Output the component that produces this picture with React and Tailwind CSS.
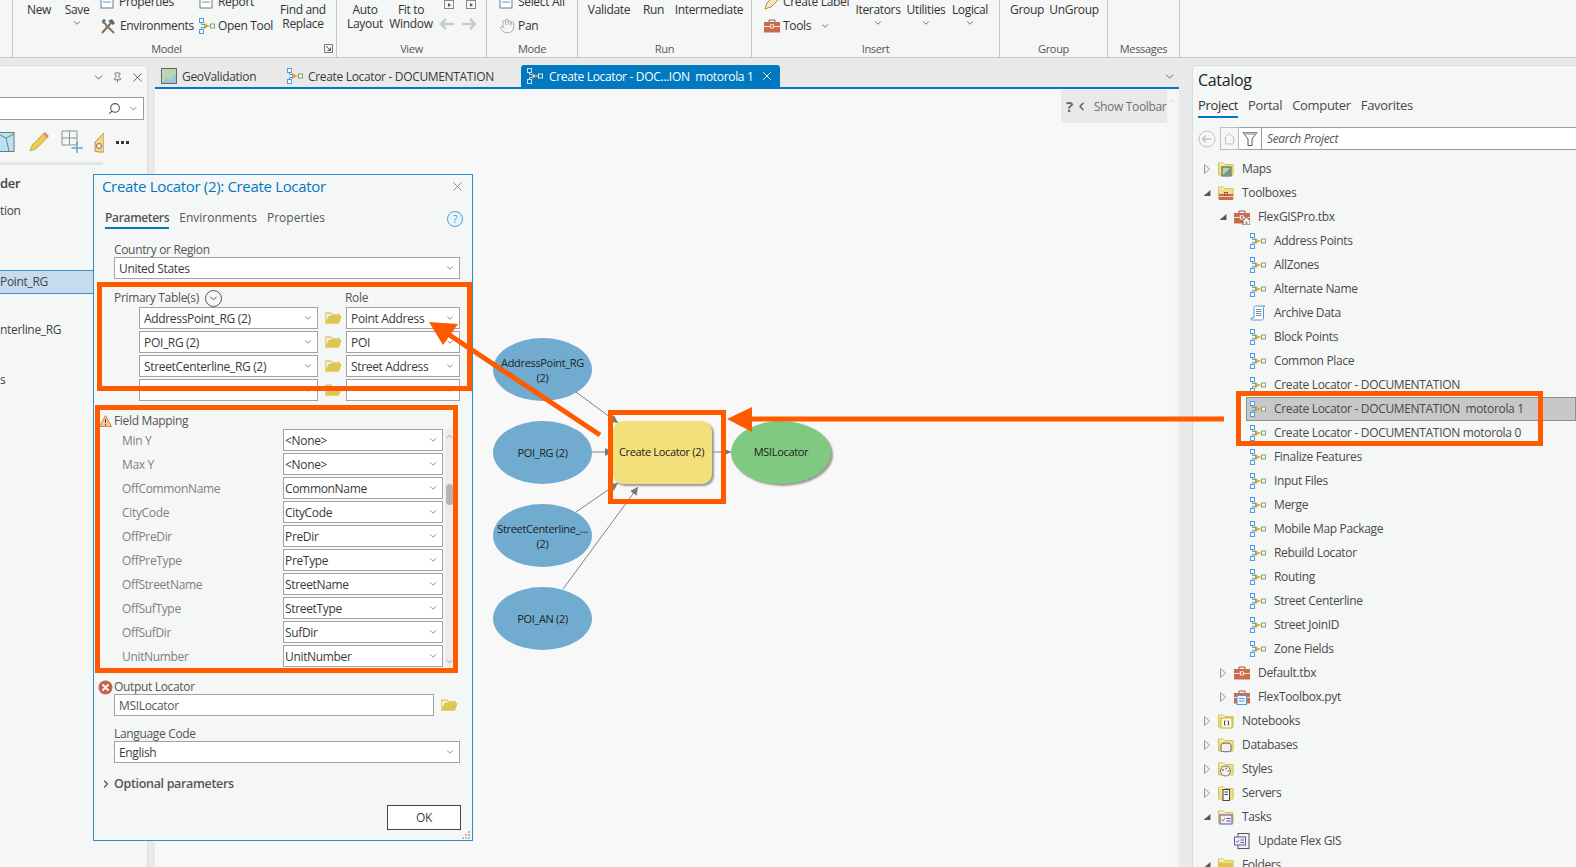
import React from "react";
import { ChevronDown, ChevronRight, ChevronUp, ChevronLeft, X, Hand, Search, Pin } from "lucide-react";

const ORANGE = "#ff5a00";

function ModelIcon({ light }) {
  const blue = light ? "#bfe0f7" : "#4b9fdc";
  const green = light ? "#d6f0c8" : "#72ad5e";
  const mid = light ? "#ffe9a6" : "#d9a94a";
  return (
    <svg width="16" height="16" viewBox="0 0 16 16" fill="none" className="shrink-0">
      <rect x="0.5" y="0.5" width="4" height="4" stroke={blue} fill={light ? "#0079c1" : "#f4f9fd"} />
      <rect x="0.5" y="11.5" width="4" height="4" stroke={blue} fill={light ? "#0079c1" : "#f4f9fd"} />
      <path d="M2.5 4.5V6.5H5.5M2.5 11.5V9.5H5.5" stroke={blue} />
      <path d="M5.5 5.5L9 8L5.5 10.5Z" fill={mid} stroke="#c98a2c" strokeWidth="0.7" />
      <path d="M9 8H11.5" stroke={mid} />
      <rect x="11.5" y="6" width="4" height="4" stroke={green} fill={light ? "#0079c1" : "#f4f9fb"} />
    </svg>
  );
}

function FolderIcon({ w = 17 }) {
  return (
    <svg width={w} height={w * 0.8} viewBox="0 0 20 16" className="shrink-0">
      <path d="M1 15V2.5H7L9 4.5H17V6H5L1 15Z" fill="none" stroke="#d8c14e" strokeWidth="1.2" />
      <path d="M1 15L4.5 6H19.5L16.5 15Z" fill="#dcc650" />
    </svg>
  );
}

function TreeFolder({ children }) {
  return (
    <svg width="16" height="16" viewBox="0 0 16 16" className="shrink-0">
      <path d="M0.5 14V2H5.5L7 3.5H15V14Z" fill="#fbf5cf" stroke="#d8c14e" />
      <rect x="0.5" y="4" width="15" height="10" fill="#e0ca55" opacity="0.55" />
      {children}
    </svg>
  );
}

function Toolbox({ extra }) {
  return (
    <svg width="16" height="16" viewBox="0 0 16 16" className="shrink-0">
      <path d="M5 4V2H11V4" fill="none" stroke="#a9553a" />
      <rect x="0" y="4" width="16" height="10.5" fill="#cc6a4c" />
      <path d="M0 8.5H16" stroke="#fff" strokeWidth="0.8" />
      <rect x="6.5" y="6.8" width="3" height="3.2" fill="#cc6a4c" stroke="#fff" strokeWidth="0.8" />
      {extra}
    </svg>
  );
}

function TreeIcon({ kind }) {
  if (kind === "model") return <ModelIcon />;
  if (kind === "script")
    return (
      <svg width="16" height="16" viewBox="0 0 16 16" fill="none" className="shrink-0">
        <path d="M4 13V2.5C4 1.5 5 1 6 1H15C14 1 13.5 2 13.5 2.5V13C13.5 14.5 12.5 15 11.5 15H2C1 15 0.5 14 1 13Z" fill="#fff" stroke="#4b9fdc" />
        <path d="M6 4.5H11.5M6 6.5H11.5M6 8.5H11.5M6 10.5H11.5" stroke="#5d6a75" strokeWidth="0.8" />
      </svg>
    );
  if (kind === "maps")
    return (
      <TreeFolder>
        <rect x="4" y="6" width="9" height="9" fill="#b6d4b0" stroke="#555" />
        <path d="M5 14L12 7V14Z" fill="#6f9e73" />
      </TreeFolder>
    );
  if (kind === "toolboxes")
    return (
      <TreeFolder>
        <rect x="1" y="9" width="14" height="6" fill="#cc6a4c" />
        <path d="M1 11.5H15" stroke="#fff" strokeWidth="0.7" />
        <rect x="6.5" y="7.5" width="3" height="3" fill="none" stroke="#a9553a" />
      </TreeFolder>
    );
  if (kind === "folders")
    return (
      <TreeFolder>
        <rect x="1" y="6" width="14" height="9" fill="#dcc650" />
      </TreeFolder>
    );
  if (kind === "tbxhome")
    return (
      <Toolbox
        extra={
          <g>
            <path d="M9 11.5L12.5 8L16 11.5V16H9Z" fill="#f5f5f5" stroke="#5d5d5d" strokeWidth="0.9" />
            <rect x="11.5" y="12.5" width="2" height="3.5" fill="#c29a6a" />
          </g>
        }
      />
    );
  if (kind === "tbx") return <Toolbox />;
  if (kind === "pyt")
    return (
      <Toolbox
        extra={
          <g>
            <rect x="3" y="6.5" width="9.5" height="9" fill="#eaf5fc" stroke="#4b9fdc" />
            <path d="M5 9.5H10.5M5 12H10.5" stroke="#4b9fdc" />
          </g>
        }
      />
    );
  if (kind === "nb")
    return (
      <TreeFolder>
        <rect x="3" y="5" width="11" height="10" fill="#fdfbe6" stroke="#c5ae3a" />
        <path d="M6.5 8V12H7.5M9.5 8H10.5V12H9.5M6.5 8H7.5" stroke="#333" fill="none" strokeWidth="0.9" />
      </TreeFolder>
    );
  if (kind === "db")
    return (
      <TreeFolder>
        <ellipse cx="8" cy="8" rx="5" ry="2" fill="#f1f1f1" stroke="#666" />
        <path d="M3 8V14C3 15 13 15 13 14V8" fill="#f1f1f1" stroke="#666" />
      </TreeFolder>
    );
  if (kind === "styles")
    return (
      <TreeFolder>
        <circle cx="7.5" cy="10" r="5" fill="#f1f1f1" stroke="#777" />
        <circle cx="5" cy="9" r="1" fill="#cc5a45" />
        <circle cx="8" cy="7.5" r="1" fill="#5a9ad4" />
        <circle cx="10.5" cy="10" r="1" fill="#72ad5e" />
      </TreeFolder>
    );
  if (kind === "servers")
    return (
      <TreeFolder>
        <rect x="5" y="4.5" width="6.5" height="11" fill="#f6f6f6" stroke="#444" />
        <path d="M6.5 7H10M6.5 9.5H10" stroke="#444" />
      </TreeFolder>
    );
  if (kind === "tasks")
    return (
      <TreeFolder>
        <rect x="2" y="6" width="12" height="9" fill="#f2eef8" stroke="#6b4fa2" />
        <path d="M3.5 10.5L5 12L7 9" stroke="#5aa052" fill="none" />
        <path d="M8.5 9.5H12.5M8.5 12H12.5" stroke="#6b4fa2" />
      </TreeFolder>
    );
  if (kind === "task")
    return (
      <svg width="16" height="16" viewBox="0 0 16 16" className="shrink-0">
        <rect x="4" y="0.5" width="11" height="15" fill="#f4f4f4" stroke="#555" />
        <rect x="0.5" y="4" width="11" height="8" fill="#f2eef8" stroke="#6b4fa2" />
        <path d="M2 8L3.5 9.5L5 7" stroke="#5aa052" fill="none" />
        <path d="M6.5 7H10M6.5 9.5H10" stroke="#6b4fa2" />
      </svg>
    );
  return <TreeFolder />;
}

function Caret({ kind }) {
  if (kind === "r")
    return (
      <svg width="8" height="10" viewBox="0 0 8 10" className="shrink-0">
        <path d="M1.5 0.5L6.5 5L1.5 9.5Z" fill="#f4f4f4" stroke="#9a9a9a" />
      </svg>
    );
  if (kind === "d")
    return (
      <svg width="8" height="10" viewBox="0 0 8 10" className="shrink-0">
        <path d="M7.5 2V8H0.5Z" fill="#555" />
      </svg>
    );
  return <span className="w-2 shrink-0" />;
}

const treeRows = [
  [0, "r", "maps", "Maps"],
  [0, "d", "toolboxes", "Toolboxes"],
  [1, "d", "tbxhome", "FlexGISPro.tbx"],
  [2, "", "model", "Address Points"],
  [2, "", "model", "AllZones"],
  [2, "", "model", "Alternate Name"],
  [2, "", "script", "Archive Data"],
  [2, "", "model", "Block Points"],
  [2, "", "model", "Common Place"],
  [2, "", "model", "Create Locator - DOCUMENTATION"],
  [2, "", "model", "Create Locator - DOCUMENTATION  motorola 1", true],
  [2, "", "model", "Create Locator - DOCUMENTATION motorola 0"],
  [2, "", "model", "Finalize Features"],
  [2, "", "model", "Input Files"],
  [2, "", "model", "Merge"],
  [2, "", "model", "Mobile Map Package"],
  [2, "", "model", "Rebuild Locator"],
  [2, "", "model", "Routing"],
  [2, "", "model", "Street Centerline"],
  [2, "", "model", "Street JoinID"],
  [2, "", "model", "Zone Fields"],
  [1, "r", "tbx", "Default.tbx"],
  [1, "r", "pyt", "FlexToolbox.pyt"],
  [0, "r", "nb", "Notebooks"],
  [0, "r", "db", "Databases"],
  [0, "r", "styles", "Styles"],
  [0, "r", "servers", "Servers"],
  [0, "d", "tasks", "Tasks"],
  [1, "", "task", "Update Flex GIS"],
  [0, "d", "folders", "Folders"],
];

const levelPad = ["pl-[10px]", "pl-[26px]", "pl-[42px]"];

function Tree() {
  return (
    <div className="mt-[7px] flex-1 overflow-hidden">
      {treeRows.map(([lvl, caret, icon, text, sel]) => (
        <div key={text} className={`flex h-6 items-center ${levelPad[lvl]}`}>
          <Caret kind={caret} />
          <div className={`ml-[3px] flex h-6 flex-1 items-center ${sel ? "border border-[#8e8e8e] bg-[#c8c8c8] pl-[3px]" : "pl-[4px]"}`}>
            <TreeIcon kind={icon} />
            <span className="ml-[8px] whitespace-pre text-[12px] text-[#4a4a4a]">{text}</span>
          </div>
        </div>
      ))}
    </div>
  );
}

function Catalog() {
  return (
    <div className="flex flex-1 flex-col rounded-tl border-l border-t border-[#dcdcdc] bg-[#f5f6f6]">
      <div className="mt-[3px] h-[22px] pl-[5px] text-[16px] leading-[22px] text-[#222]">Catalog</div>
      <div className="mt-[3px] flex h-[24px] items-start gap-[10px] pl-[5px] text-[13px] leading-[22px] text-[#4a4a4a]">
        <span className="h-[24px] border-b-2 border-[#0079c1] text-[#333]">Project</span>
        <span>Portal</span>
        <span>Computer</span>
        <span>Favorites</span>
      </div>
      <div className="mt-[9px] flex h-[23px] items-center">
        <svg width="18" height="18" viewBox="0 0 18 18" fill="none" className="ml-[5px] shrink-0">
          <circle cx="9" cy="9" r="8" stroke="#c4c4c4" />
          <path d="M13 9H5M8 5.5L4.5 9L8 12.5" stroke="#c4c4c4" strokeWidth="1.5" />
        </svg>
        <div className="ml-[4px] flex h-[23px] w-[19px] items-center justify-center border border-[#bdbdbd]">
          <svg width="13" height="13" viewBox="0 0 13 13" fill="none">
            <path d="M1 6.5L6.5 1.5L12 6.5M2.5 6V12H10.5V6" stroke="#c2c2c2" />
          </svg>
        </div>
        <div className="flex h-[23px] w-[23px] items-center justify-center border-y border-r border-[#9b9b9b] bg-white">
          <svg width="16" height="16" viewBox="0 0 16 16" fill="none">
            <path d="M1 1.5H15L10 8V14.5H6V8Z" stroke="#555" />
            <path d="M1 1.5H15L13 4H3Z" fill="#bdbdbd" />
          </svg>
        </div>
        <div className="flex h-[23px] flex-1 items-center border-y border-[#9b9b9b] bg-white pl-[5px] text-[12px] italic text-[#555]">Search Project</div>
      </div>
      <Tree />
    </div>
  );
}

function RibbonGroup({ label, w, launcher, pr, children }) {
  return (
    <div className={`flex h-full shrink-0 flex-col border-r border-[#c4c4c4] ${w}`}>
      <div className="flex h-[41px] overflow-hidden">{children}</div>
      <div className={`relative flex h-[16px] items-center justify-center text-[11px] text-[#555] ${pr || ""}`}>
        {label}
        {launcher && (
          <svg width="9" height="9" viewBox="0 0 9 9" fill="none" className="absolute right-[3px] top-[3px]">
            <path d="M0.5 8.5V0.5H8.5V8.5Z" stroke="#777" />
            <path d="M2 2L6.5 6.5M6.5 3.5V6.5H3.5" stroke="#555" />
          </svg>
        )}
      </div>
    </div>
  );
}

function Big({ w, lines, chev }) {
  return (
    <div className={`flex shrink-0 flex-col items-center pt-[3px] text-[12px] leading-[14px] text-[#333] ${w}`}>
      {lines.map((l) => (
        <span key={l} className="whitespace-nowrap">{l}</span>
      ))}
      {chev && <ChevronDown size={10} strokeWidth={2} className="mt-[1px] text-[#555]" />}
    </div>
  );
}

function Small({ w, icon1, text1, icon2, text2, extra }) {
  return (
    <div className={`-mt-[10px] flex shrink-0 flex-col text-[12px] text-[#333] ${w}`}>
      <div className="flex h-[24px] items-center gap-[3px] whitespace-nowrap">{icon1}<span>{text1}</span></div>
      <div className="flex h-[24px] items-center gap-[3px] whitespace-nowrap">{icon2}<span>{text2}</span>{extra}</div>
    </div>
  );
}

const DocIcon = () => (
  <svg width="16" height="16" viewBox="0 0 16 16" fill="none" className="shrink-0">
    <rect x="1" y="1" width="12" height="13" fill="#fff" stroke="#777" />
    <path d="M3 5H11M3 8H11" stroke="#4b9fdc" />
  </svg>
);
const ToolsIcon = () => (
  <svg width="17" height="16" viewBox="0 0 17 16" fill="none" className="shrink-0">
    <path d="M2 15L11 5" stroke="#8a6a44" strokeWidth="2" />
    <path d="M8 3L12 1L15 5L13 7Z" fill="#666" />
    <path d="M14 15L5 6" stroke="#777" strokeWidth="2" />
    <path d="M2 2.5C3 1 5 1 6 2L5 4L6.5 6L4 6C2.5 5.5 1.5 4 2 2.5Z" fill="#777" />
  </svg>
);
const LabelIcon = () => (
  <svg width="16" height="16" viewBox="0 0 16 16" fill="none" className="shrink-0">
    <path d="M1 15L3 9L10 2L14 6L7 13Z" fill="#f4e6b8" stroke="#b78e3f" />
  </svg>
);
const TinyBox = () => (
  <div className="flex h-[9px] w-[10px] items-center justify-center border border-[#888]">
    <span className="h-0 w-0 border-y-[2px] border-l-[3px] border-y-transparent border-l-[#555]" />
  </div>
);

function Ribbon() {
  return (
    <div className="flex h-[58px] shrink-0 border-b border-[#c8c8c8] bg-[#f5f6f6]">
      <div className="h-full w-[13px] shrink-0 border-r border-[#c4c4c4]" />
      <RibbonGroup label="Model" w="w-[324px]" launcher pr="pr-4">
        <Big w="w-[52px]" lines={["New"]} />
        <Big w="w-[24px]" lines={["Save"]} chev />
        <div className="w-[11px] shrink-0" />
        <Small w="w-[99px]" icon1={<DocIcon />} text1="Properties" icon2={<ToolsIcon />} text2="Environments" />
        <Small w="w-[80px]" icon1={<DocIcon />} text1="Report" icon2={<ModelIcon />} text2="Open Tool" />
        <Big w="w-[48px]" lines={["Find and", "Replace"]} />
      </RibbonGroup>
      <RibbonGroup label="View" w="w-[150px]">
        <Big w="w-[56px]" lines={["Auto", "Layout"]} />
        <Big w="w-[36px]" lines={["Fit to", "Window"]} />
        <div className="flex w-[50px] shrink-0 flex-col pl-[15px]">
          <div className="flex gap-[12px]"><TinyBox /><TinyBox /></div>
          <div className="-ml-[6px] mt-[8px] flex gap-[4px] text-[#c9c9c9]">
            <svg width="18" height="14" viewBox="0 0 18 14" fill="none" className="shrink-0"><path d="M16 7H3M8 2L3 7L8 12" stroke="currentColor" strokeWidth="2.5" /></svg>
            <svg width="18" height="14" viewBox="0 0 18 14" fill="none" className="shrink-0"><path d="M2 7H15M10 2L15 7L10 12" stroke="currentColor" strokeWidth="2.5" /></svg>
          </div>
        </div>
      </RibbonGroup>
      <RibbonGroup label="Mode" w="w-[91px]">
        <div className="w-[12px] shrink-0" />
        <Small
          w="w-[76px]"
          icon1={<DocIcon />}
          text1="Select All"
          icon2={<Hand size={16} strokeWidth={1} className="shrink-0 text-[#8a8a8a]" />}
          text2="Pan"
        />
      </RibbonGroup>
      <RibbonGroup label="Run" w="w-[174px]">
        <Big w="w-[62px]" lines={["Validate"]} />
        <Big w="w-[27px]" lines={["Run"]} />
        <Big w="w-[84px]" lines={["Intermediate"]} />
      </RibbonGroup>
      <RibbonGroup label="Insert" w="w-[248px]">
        <div className="w-[12px] shrink-0" />
        <Small
          w="w-[88px]"
          icon1={<LabelIcon />}
          text1="Create Label"
          icon2={<Toolbox />}
          text2="Tools"
          extra={<ChevronDown size={10} strokeWidth={2} className="ml-[6px] text-[#555]" />}
        />
        <Big w="w-[52px]" lines={["Iterators"]} chev />
        <Big w="w-[44px]" lines={["Utilities"]} chev />
        <Big w="w-[44px]" lines={["Logical"]} chev />
      </RibbonGroup>
      <RibbonGroup label="Group" w="w-[108px]">
        <Big w="w-[54px]" lines={["Group"]} />
        <Big w="w-[40px]" lines={["UnGroup"]} />
      </RibbonGroup>
      <RibbonGroup label="Messages" w="w-[72px]" />
    </div>
  );
}

function LeftPanel() {
  return (
    <div className="w-[148px] shrink-0 rounded-tr border-r border-t border-[#dcdcdc] bg-[#f5f6f6] text-[12px] text-[#444]">
      <div className="flex h-[23px] items-center justify-end gap-[7px] pr-[2px] text-[#444]">
        <ChevronDown size={13} strokeWidth={1.5} />
        <Pin size={11} strokeWidth={1.5} />
        <X size={15} strokeWidth={1.3} />
      </div>
      <div className="mt-[8px] flex h-[23px] w-[144px] items-center justify-end gap-[7px] border-y border-r border-[#9b9b9b] bg-white pr-[4px] text-[#555]">
        <Search size={13} strokeWidth={2} className="-scale-x-100" />
        <ChevronDown size={11} strokeWidth={1.5} />
      </div>
      <div className="mt-[11px] flex h-[22px] w-[135px] items-center">
        <svg width="15" height="20" viewBox="0 0 15 20" className="shrink-0">
          <rect x="-2" y="0.5" width="16" height="19" fill="#b7e3f5" stroke="#777" />
          <path d="M0 3L6 6L9 19M6 6L14 2" fill="none" stroke="#7c7c7c" />
        </svg>
        <svg width="22" height="22" viewBox="0 0 22 22" fill="none" className="ml-[13px] shrink-0">
          <path d="M2 20L4 14L16 2L20 6L8 18Z" fill="#eccb55" stroke="#b49b35" strokeWidth="0.7" />
          <path d="M15 3L17 1L21 5L19 7Z" fill="#e08a7a" />
        </svg>
        <svg width="24" height="24" viewBox="0 0 24 24" fill="none" className="ml-[11px] shrink-0">
          <path d="M1 1H16V15H1ZM8.5 1V15M1 8H16" stroke="#8f8f8f" />
          <path d="M16 12V23M10.5 18H22" stroke="#5aa5dd" strokeWidth="1.5" />
        </svg>
        <svg width="10" height="22" viewBox="0 0 10 22" fill="none" className="ml-[9px] shrink-0">
          <path d="M10 2L1 11V20L4 21H10Z" fill="#f1d78e" stroke="#b78e3f" />
          <circle cx="5" cy="15" r="2.5" fill="#f8f0d0" stroke="#8a6a44" />
        </svg>
        <span className="ml-[12px] flex gap-[2px]">
          <span className="h-[3px] w-[3px] bg-[#333]" />
          <span className="h-[3px] w-[3px] bg-[#333]" />
          <span className="h-[3px] w-[3px] bg-[#333]" />
        </span>
      </div>
      <div className="mt-[9px] h-[3px] w-[103px] bg-[#e5e5e5]" />
      <div className="mt-[7px] flex h-[24px] items-center text-[13px] font-semibold text-[#444]">der</div>
      <div className="mt-[3px] flex h-[24px] items-center">tion</div>
      <div className="mt-[47px] flex h-[24px] items-center border-y border-[#3f8fca] bg-[#c6dbee]">Point_RG</div>
      <div className="mt-[24px] flex h-[24px] items-center">nterline_RG</div>
      <div className="mt-[26px] flex h-[24px] items-center">s</div>
    </div>
  );
}

function Select({ w, children, tight }) {
  return (
    <div className={`flex h-[22px] shrink-0 items-center justify-between border border-[#a3a3a3] bg-white pr-[4px] text-[12px] text-[#3a3a3a] ${tight ? "pl-[1px]" : "pl-[4px]"} ${w}`}>
      <span className="whitespace-nowrap pt-[1px]">{children}</span>
      <ChevronDown size={10} strokeWidth={1.8} className="shrink-0 text-[#666]" />
    </div>
  );
}

const fields = [
  ["Min Y", "<None>"],
  ["Max Y", "<None>"],
  ["OffCommonName", "CommonName"],
  ["CityCode", "CityCode"],
  ["OffPreDir", "PreDir"],
  ["OffPreType", "PreType"],
  ["OffStreetName", "StreetName"],
  ["OffSufType", "StreetType"],
  ["OffSufDir", "SufDir"],
  ["UnitNumber", "UnitNumber"],
];

const tables = [
  ["AddressPoint_RG (2)", "Point Address"],
  ["POI_RG (2)", "POI"],
  ["StreetCenterline_RG (2)", "Street Address"],
  ["", ""],
];

function Dialog() {
  return (
    <div className="absolute left-[93px] top-[174px] z-20 flex h-[667px] w-[380px] flex-col border border-[#2b8fd0] bg-[#f5f6f6] text-[12px] text-[#555]">
      <div className="flex h-[22px] items-center justify-between pl-[8px] pr-[7px]">
        <span className="text-[15px] text-[#0079c1]">Create Locator (2): Create Locator</span>
        <X size={15} strokeWidth={1.5} className="text-[#8a8a8a]" />
      </div>
      <div className="ml-[11px] mr-[9px] mt-[8px] flex h-[24px] items-end gap-[10px]">
        <span className="border-b-2 border-[#0079c1] font-semibold text-[#555]">Parameters</span>
        <span className="pb-[2px] tracking-normal">Environments</span>
        <span className="pb-[2px] tracking-normal">Properties</span>
        <svg width="16" height="16" viewBox="0 0 16 16" fill="none" className="mb-[2px] ml-auto">
          <circle cx="8" cy="8" r="7.5" stroke="#4b9fdc" fill="#eaf4fb" />
          <text x="8" y="12" textAnchor="middle" fontSize="11" fill="#4b9fdc">?</text>
        </svg>
      </div>
      <div className="ml-[20px] mt-[13px] h-[15px] leading-[15px]">Country or Region</div>
      <div className="ml-[20px]"><Select w="w-[346px]">United States</Select></div>
      <div className="ml-[20px] mt-[10px] flex h-[18px] items-center">
        <div className="flex w-[231px] items-center">
          <span>Primary Table(s)</span>
          <span className="ml-[6px] flex h-[17px] w-[17px] items-center justify-center rounded-full border border-[#555]">
            <ChevronDown size={11} strokeWidth={2} className="text-[#444]" />
          </span>
        </div>
        <span>Role</span>
      </div>
      <div className="ml-[45px] flex flex-col gap-[2px]">
        {tables.map(([a, b], i) => (
          <div key={i} className="flex items-center">
            <Select w="w-[179px]">{a}</Select>
            <div className="ml-[7px] mr-[4px]"><FolderIcon /></div>
            <Select w="w-[114px]">{b}</Select>
          </div>
        ))}
      </div>
      <div className="mt-[11px] flex h-[17px] items-center pl-[5px]">
        <svg width="13" height="12" viewBox="0 0 13 12" className="shrink-0">
          <path d="M6.5 0.5L12.5 11.5H0.5Z" fill="#f3c99a" stroke="#c98a4a" />
          <path d="M6.5 4V8M6.5 9V10.5" stroke="#444" />
        </svg>
        <span className="ml-[2px]">Field Mapping</span>
      </div>
      <div className="flex pl-[28px]">
        <div className="flex flex-col gap-[2px]">
          {fields.map(([l, v]) => (
            <div key={l} className="flex items-center">
              <span className="w-[161px] pt-[1px] text-[#808080]">{l}</span>
              <Select w="w-[160px]" tight>{v}</Select>
            </div>
          ))}
        </div>
        <div className="ml-[2px] flex h-[238px] w-[9px] flex-col items-center bg-[#ececec]">
          <ChevronUp size={9} strokeWidth={1.5} className="mt-[3px] text-[#666]" />
          <div className="mt-[43px] h-[21px] w-[7px] rounded-sm bg-[#b5b5b5]" />
          <ChevronDown size={9} strokeWidth={1.5} className="mb-[1px] mt-auto text-[#666]" />
        </div>
      </div>
      <div className="mt-[13px] flex h-[14px] items-center pl-[4px]">
        <svg width="15" height="15" viewBox="0 0 15 15" className="shrink-0">
          <circle cx="7.5" cy="7.5" r="7" fill="#c8614a" />
          <path d="M4.5 4.5L10.5 10.5M10.5 4.5L4.5 10.5" stroke="#fff" strokeWidth="1.8" />
        </svg>
        <span className="ml-[1px]">Output Locator</span>
      </div>
      <div className="ml-[20px] flex items-center">
        <div className="flex h-[22px] w-[320px] items-center border border-[#a3a3a3] bg-white pl-[4px] pt-[1px] text-[#555]">MSILocator</div>
        <div className="ml-[7px]"><FolderIcon /></div>
      </div>
      <div className="ml-[20px] mt-[10px] h-[15px] leading-[15px]">Language Code</div>
      <div className="ml-[20px]"><Select w="w-[346px]">English</Select></div>
      <div className="mt-[11px] flex h-[18px] items-center pl-[6px] pt-[2px] text-[12.5px] font-semibold text-[#555]">
        <ChevronRight size={12} strokeWidth={2.5} className="mr-[2px] shrink-0" />
        <span>Optional parameters</span>
      </div>
      <div className="ml-[293px] mt-[13px] flex h-[25px] w-[74px] items-center justify-center border border-[#444] bg-white text-[#444]">OK</div>
      <div className="absolute bottom-[1px] right-[2px] grid grid-cols-3 gap-[1px]">
        {[0, 1, 2, 3, 4, 5, 6, 7, 8].map((i) => (
          <span key={i} className={`h-[2px] w-[2px] ${i === 0 || i === 1 || i === 3 ? "bg-transparent" : "bg-[#bbb]"}`} />
        ))}
      </div>
    </div>
  );
}

function Ellipse({ pos, fill, children }) {
  return (
    <div className={`absolute flex h-[63px] w-[99px] items-center justify-center rounded-[50%] text-center text-[11px] leading-[15px] text-[#222] ${pos} ${fill}`}>
      {children}
    </div>
  );
}

function Diagram() {
  return (
    <>
      <svg className="absolute left-0 top-0 h-[778px] w-[1012px]" viewBox="0 0 1012 778" fill="none">
        <defs>
          <marker id="ah" markerWidth="9" markerHeight="8" refX="8" refY="4" markerUnits="userSpaceOnUse" orient="auto">
            <path d="M0 0L8 4L0 8Z" fill="#777" />
          </marker>
        </defs>
        <g stroke="#808080" strokeWidth="1">
          <path d="M421 303L463 334" markerEnd="url(#ah)" />
          <path d="M437 363L458 363" markerEnd="url(#ah)" />
          <path d="M421 423L463 394" markerEnd="url(#ah)" />
          <path d="M408 500L483 398" markerEnd="url(#ah)" />
          <path d="M557 363L576 363" markerEnd="url(#ah)" />
        </g>
      </svg>
      <Ellipse pos="left-[338px] top-[249px]" fill="bg-[#71acd0]">
        <span>AddressPoint_RG<br />(2)</span>
      </Ellipse>
      <Ellipse pos="left-[338px] top-[332px]" fill="bg-[#71acd0]">POI_RG (2)</Ellipse>
      <Ellipse pos="left-[338px] top-[415px]" fill="bg-[#71acd0]">
        <span>StreetCenterline_...<br />(2)</span>
      </Ellipse>
      <Ellipse pos="left-[338px] top-[498px]" fill="bg-[#71acd0]">POI_AN (2)</Ellipse>
      <div className="absolute left-[458px] top-[332px] flex h-[63px] w-[99px] items-center justify-center rounded-[10px] bg-[#f3e07a] pr-[2px] text-[11px] text-[#222] shadow-[2px_2px_2px_#999]">
        Create Locator (2)
      </div>
      <div className="absolute left-[576px] top-[332px] flex h-[63px] w-[100px] items-center justify-center rounded-[50%] bg-[#80c981] text-[11px] text-[#222] shadow-[2px_2px_2px_#999]">
        MSILocator
      </div>
    </>
  );
}

function Center() {
  return (
    <div className="ml-[7px] flex w-[1024px] shrink-0 flex-col">
      <div className="flex h-[24px] shrink-0 border-b-2 border-[#0079c1] text-[12px] text-[#3a3a3a]">
        <div className="flex w-[126px] items-center pl-[6px]">
          <svg width="16" height="16" viewBox="0 0 16 16" className="shrink-0">
            <rect x="0.5" y="0.5" width="15" height="15" fill="#b9d6b4" stroke="#666" />
            <path d="M1 15L6 9L10 12L15 5V15Z" fill="#9cc4dc" />
          </svg>
          <span className="ml-[5px] pt-[1px]">GeoValidation</span>
        </div>
        <div className="flex w-[240px] items-center pl-[6px]">
          <ModelIcon />
          <span className="ml-[5px] whitespace-nowrap pt-[1px]">Create Locator - DOCUMENTATION</span>
        </div>
        <div className="flex w-[259px] items-center rounded-t-[3px] bg-[#0079c1] pl-[6px] pr-[6px] text-white">
          <ModelIcon light />
          <span className="ml-[6px] whitespace-pre pt-[1px]">Create Locator - DOC...ION  motorola 1</span>
          <X size={14} strokeWidth={1.5} className="ml-auto shrink-0" />
        </div>
        <div className="flex flex-1 items-center justify-end pr-[3px]">
          <ChevronDown size={13} strokeWidth={1.5} className="text-[#555]" />
        </div>
      </div>
      <div className="relative flex-1 bg-[#f8f8f8]">
        <Diagram />
        <div className="absolute right-0 top-0 h-full w-[12px] bg-[#f6f6f6] pt-[6px] text-[#c9c9c9]">
          <ChevronUp size={11} strokeWidth={1.5} />
        </div>
        <div className="absolute left-[906px] top-[1px] flex h-[33px] w-[106px] items-center bg-[#e9e9e9] pl-[5px] text-[12px] text-[#6f6f6f]">
          <span className="text-[15px] font-bold text-[#666]">?</span>
          <ChevronLeft size={13} strokeWidth={2.5} className="ml-[2px] text-[#555]" />
          <span className="ml-[6px] whitespace-nowrap">Show Toolbar</span>
        </div>
      </div>
    </div>
  );
}

function Annotations() {
  return (
    <>
      <div className="absolute left-[97px] top-[282px] z-30 h-[109px] w-[375px] border-[5px] border-[#ff5a00]" />
      <div className="absolute left-[95px] top-[405px] z-30 h-[268px] w-[363px] border-[5px] border-[#ff5a00]" />
      <div className="absolute left-[608px] top-[410px] z-30 h-[94px] w-[118px] border-[5px] border-[#ff5a00]" />
      <div className="absolute left-[1236px] top-[391px] z-30 h-[55px] w-[307px] border-[5px] border-[#ff5a00]" />
      <svg className="absolute left-0 top-0 z-30 h-[867px] w-[1576px]" viewBox="0 0 1576 867" fill="none">
        <path d="M1224 419H750" stroke={ORANGE} strokeWidth="5" />
        <path d="M727 419L752 407V432Z" fill={ORANGE} />
        <path d="M600 435L445 332" stroke={ORANGE} strokeWidth="5" />
        <path d="M429 322L458 324L443 345Z" fill={ORANGE} />
      </svg>
    </>
  );
}

export default function App() {
  return (
    <div className="relative flex h-[867px] w-[1576px] flex-col overflow-hidden bg-[#e9e9e9] font-['Open_Sans',sans-serif] tracking-[-0.33px]">
      <Ribbon />
      <div className="flex min-h-0 flex-1 pt-[7px]">
        <LeftPanel />
        <Center />
        <div className="w-[13px] shrink-0" />
        <Catalog />
      </div>
      <Dialog />
      <Annotations />
    </div>
  );
}
